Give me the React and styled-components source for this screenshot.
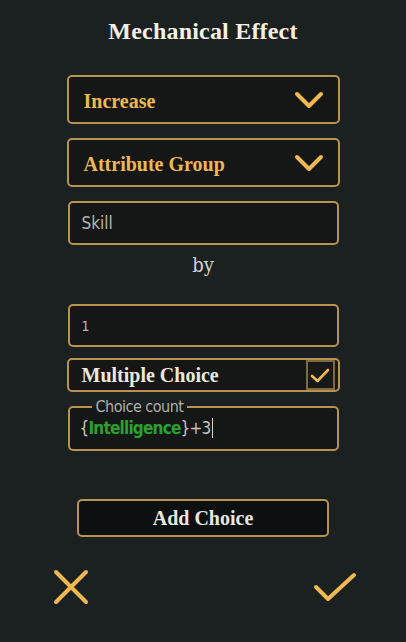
import React from 'react';
import styled, { createGlobalStyle } from 'styled-components';

const GlobalStyle = createGlobalStyle`
    html, body {
        margin: 0;
        padding: 0;
        background: #1b2020;
    }
    * { box-sizing: border-box; }
`;

const gold = '#efb851';
const border = '#b8924e';
const narrow = '"DejaVu Sans Condensed", "DejaVu Sans", sans-serif';

export default function App() {
    return (
        <Page>
            <GlobalStyle />
            <Title>Mechanical Effect</Title>

            <Select>
                <SelectText>Increase</SelectText>
                <Chevron />
            </Select>
            <Select $mt={14}>
                <SelectText>Attribute Group</SelectText>
                <Chevron />
            </Select>

            <Input $mt={14}>Skill</Input>
            <By>by</By>
            <Input $mt={0} $small>1</Input>

            <ToggleRow>
                <ToggleLabel>Multiple Choice</ToggleLabel>
                <CheckBox>
                    <svg width="20" height="16" viewBox="0 0 20 16">
                        <path d="M2 9 L7.5 14 L18 3" fill="none" stroke={gold} strokeWidth="2.6" strokeLinecap="round" strokeLinejoin="round" />
                    </svg>
                </CheckBox>
            </ToggleRow>

            <Field>
                <Legend>Choice count</Legend>
                <Formula>
                    <Brace>{'{'}</Brace><Ref>Intelligence</Ref><Brace>{'}'}</Brace>+3<Caret />
                </Formula>
            </Field>

            <AddButton>Add Choice</AddButton>

            <Footer>
                <IconButton aria-label="cancel">
                    <svg width="36" height="36" viewBox="0 0 36 36">
                        <path d="M3 3 L33 33 M33 3 L3 33" stroke={gold} strokeWidth="4" strokeLinecap="round" />
                    </svg>
                </IconButton>
                <IconButton aria-label="confirm">
                    <svg width="44" height="34" viewBox="0 0 44 34">
                        <path d="M3 17 L15 29 L41 5" fill="none" stroke={gold} strokeWidth="4" strokeLinecap="round" strokeLinejoin="round" />
                    </svg>
                </IconButton>
            </Footer>
        </Page>
    );
}

const Chevron = () => (
    <svg width="30" height="18" viewBox="0 0 30 18">
        <path d="M3 3 L15 15 L27 3" fill="none" stroke={gold} strokeWidth="4" strokeLinecap="round" strokeLinejoin="round" />
    </svg>
);

const Page = styled.div`
    width: 406px;
    height: 642px;
    display: flex;
    flex-direction: column;
    align-items: center;
    padding-top: 16px;
    background: #1b2020;
    font-family: "Liberation Serif", "DejaVu Serif", serif;
`;

const Title = styled.h1`
    margin: 0;
    height: 30px;
    line-height: 30px;
    font-size: 24px;
    font-weight: bold;
    color: #f4f0e4;
    letter-spacing: 0.2px;
`;

const Select = styled.div`
    margin-top: ${p => p.$mt ?? 29}px;
    width: 273px;
    height: 49px;
    display: flex;
    align-items: center;
    justify-content: space-between;
    padding: 0 14px 0 15px;
    background: #151716;
    border: 2px solid ${border};
    border-radius: 5px;
`;

const SelectText = styled.span`
    font-size: 20px;
    font-weight: bold;
    color: ${gold};
    padding-top: 3px;
`;

const Input = styled.div`
    margin-top: ${p => p.$mt}px;
    width: 271px;
    height: ${p => (p.$small ? 43 : 44)}px;
    display: flex;
    align-items: center;
    padding-left: 12px;
    background: #151716;
    border: 2px solid ${border};
    border-radius: 5px;
    font-family: ${narrow};
    font-size: ${p => (p.$small ? 14 : 17)}px;
    color: #b4b4ae;
`;

const By = styled.div`
    height: 59px;
    padding-top: 8px;
    font-size: 20px;
    color: #d4d4d0;
    font-family: "DejaVu Serif Condensed", "DejaVu Serif", serif;
`;

const ToggleRow = styled.div`
    margin-top: 11px;
    width: 273px;
    height: 34px;
    display: flex;
    align-items: center;
    justify-content: space-between;
    padding: 0 3px 0 13px;
    background: #151716;
    border: 2px solid ${border};
    border-radius: 5px;
`;

const ToggleLabel = styled.span`
    font-size: 20px;
    font-weight: bold;
    color: #ece8dc;
`;

const CheckBox = styled.span`
    width: 29px;
    height: 30px;
    display: flex;
    align-items: center;
    justify-content: center;
    border: 2px solid #7d6a44;
    background: #181917;
`;

const Field = styled.fieldset`
    margin: 8px 0 0;
    width: 271px;
    height: 51px;
    padding: 0 10px;
    background: #151716;
    border: 2px solid ${border};
    border-radius: 5px;
`;

const Legend = styled.legend`
    margin-left: 12px;
    padding: 0 4px;
    font-family: ${narrow};
    font-size: 16px;
    letter-spacing: -0.5px;
    line-height: 14px;
    color: #b0b0aa;
`;

const Formula = styled.div`
    display: flex;
    align-items: center;
    height: 22px;
    margin-top: 3px;
    font-family: ${narrow};
    font-size: 17px;
    letter-spacing: -0.8px;
    color: #c4c4be;
`;

const Brace = styled.span`
    color: #c4c4be;
`;

const Ref = styled.span`
    color: #2aa12e;
    font-weight: bold;
`;

const Caret = styled.span`
    width: 1px;
    height: 20px;
    margin-left: 2px;
    background: #d8d8d0;
`;

const AddButton = styled.button`
    margin-top: 48px;
    width: 252px;
    height: 38px;
    background: #0d1011;
    border: 2px solid ${border};
    border-radius: 5px;
    font-family: "Liberation Serif", "DejaVu Serif", serif;
    font-size: 20px;
    font-weight: bold;
    color: #e8e6e0;
    cursor: pointer;
`;

const Footer = styled.div`
    margin-top: 32px;
    width: 100%;
    display: flex;
    justify-content: space-between;
    align-items: center;
    padding: 0 49px 0 53px;
`;

const IconButton = styled.button`
    padding: 0;
    background: none;
    border: none;
    display: flex;
    cursor: pointer;
`;
